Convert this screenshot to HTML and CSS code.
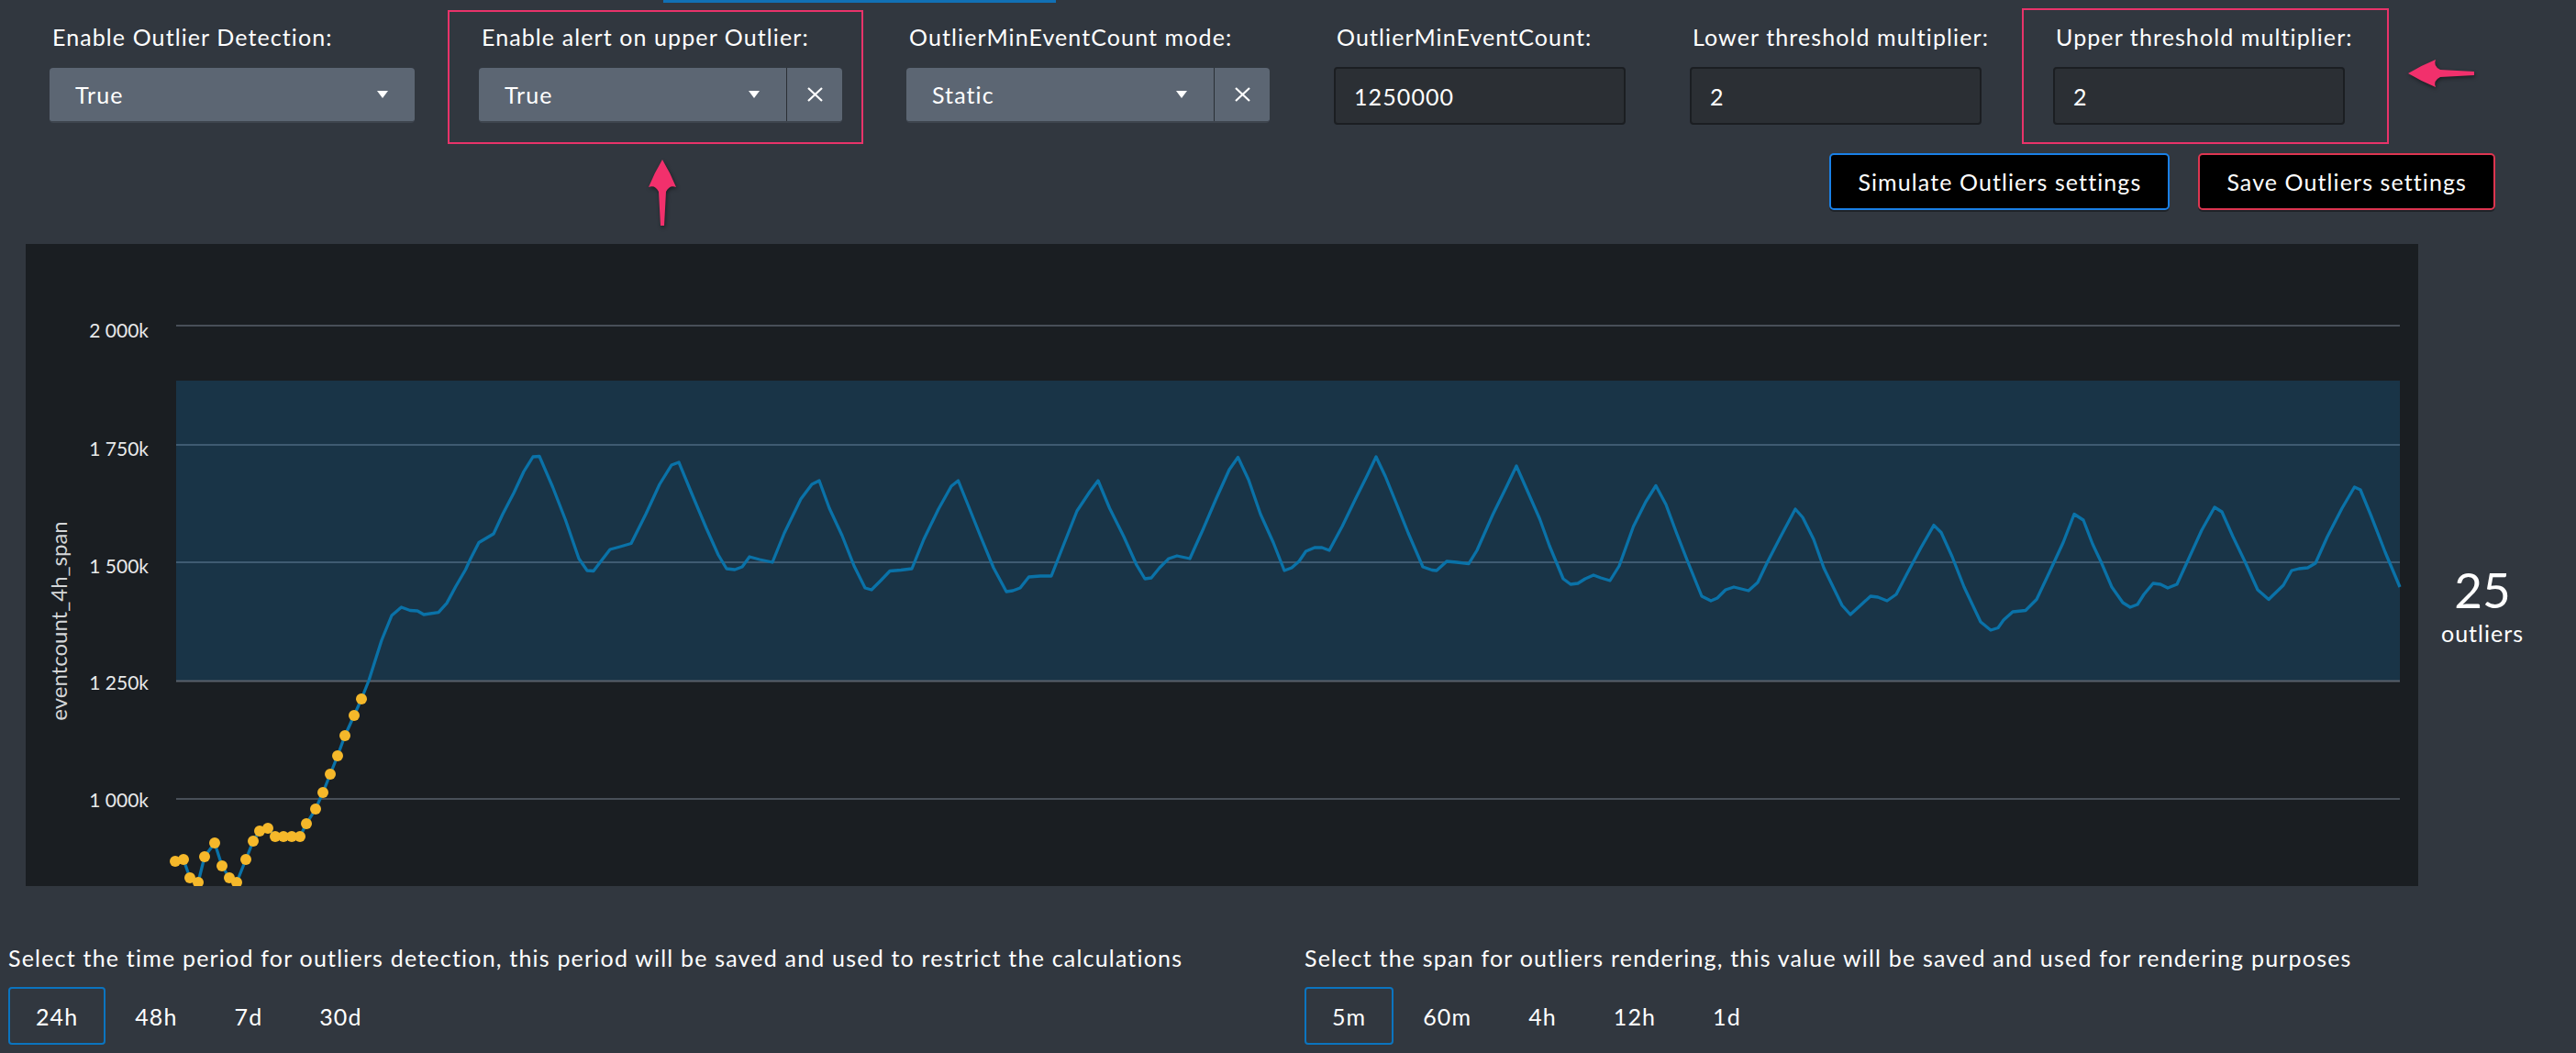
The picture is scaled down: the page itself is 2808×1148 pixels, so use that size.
FILE: index.html
```html
<!DOCTYPE html>
<html>
<head>
<meta charset="utf-8">
<title>Outliers settings</title>
<link rel="stylesheet" href="styles.css">
</head>
<body>
<div class="page">
  <div class="tabline"></div>

  <div class="form-row">
    <div class="field">
      <div class="lbl">Enable Outlier Detection:</div>
      <div class="select sel-first">
        <div class="sel-main"><span>True</span><span class="caret"></span></div>
      </div>
    </div>
    <div class="field">
      <div class="lbl">Enable alert on upper Outlier:</div>
      <div class="select">
        <div class="sel-main"><span>True</span><span class="caret"></span></div>
        <div class="sel-x"><svg width="19" height="16" viewBox="0 0 19 16"><path d="M2 1 L17 15 M17 1 L2 15" stroke="#fff" stroke-width="2.2" fill="none"/></svg></div>
      </div>
    </div>
    <div class="field">
      <div class="lbl">OutlierMinEventCount mode:</div>
      <div class="select">
        <div class="sel-main"><span>Static</span><span class="caret"></span></div>
        <div class="sel-x"><svg width="19" height="16" viewBox="0 0 19 16"><path d="M2 1 L17 15 M17 1 L2 15" stroke="#fff" stroke-width="2.2" fill="none"/></svg></div>
      </div>
    </div>
    <div class="field">
      <div class="lbl">OutlierMinEventCount:</div>
      <div class="txt">1250000</div>
    </div>
    <div class="field">
      <div class="lbl">Lower threshold multiplier:</div>
      <div class="txt">2</div>
    </div>
    <div class="field">
      <div class="lbl">Upper threshold multiplier:</div>
      <div class="txt">2</div>
    </div>
  </div>

  <div class="actions">
    <button class="btn btn-sim">Simulate Outliers settings</button>
    <button class="btn btn-save">Save Outliers settings</button>
  </div>

  <div class="chart-row">
    <div class="chart-panel">
      <svg class="chart" viewBox="28 266 2608 700" width="2608" height="700">
        <rect x="192" y="415" width="2424" height="327" fill="#193447"/>
        <line x1="192" x2="2616" y1="355" y2="355" class="grid"/>
        <line x1="192" x2="2616" y1="485" y2="485" class="grid-band"/>
        <line x1="192" x2="2616" y1="613" y2="613" class="grid-band"/>
        <line x1="192" x2="2616" y1="742.5" y2="742.5" class="grid grid-edge"/>
        <line x1="192" x2="2616" y1="871" y2="871" class="grid"/>
        <text x="162" y="368" class="tick">2 000k</text>
        <text x="162" y="496.5" class="tick">1 750k</text>
        <text x="162" y="625" class="tick">1 500k</text>
        <text x="162" y="752" class="tick">1 250k</text>
        <text x="162" y="880" class="tick">1 000k</text>
        <text class="ytitle" transform="translate(73,677) rotate(-90)">eventcount_4h_span</text>
        <polyline class="series" points="191,939 200,937 207,957 216,962 223,934 234,919 242,944 250,957 258,962 268,937 276,917 283,906 292,903 300,912 309,912 318,912 327,912 334,898 344,882 352,864 360,844 368,824 376,802 386,780 394,762 402,742 416,698 427,671 437.5,662 447,665.5 455,666 462,670 478,667.6 487,657.6 497,639 507.5,621 513,609 522,591.5 538,582 548,560.5 560,537.5 571,514 581,498 588,497.5 602.5,531 616.5,567 631,609 640,622 647,622.5 655,612 665,599 676,596 688,592.5 704,560.5 719,528 732,507 740,504 754,538 770,576 783,605 792,620 801,621 809,618 817,607 828,610 842,613 855,581 873,544 885,528 893,524 904,554 918,584 931,617 943,641 950,643 960,633 970,622.5 982,621.5 994,620 1007,588 1023,555 1037,530 1044.5,524 1055,550 1069,585 1083,619 1097,645 1104,644 1112,641 1121.5,629 1134,628 1146,628 1159,595 1174,557 1188,536 1197,524 1209.5,554 1225,585 1239,616 1248,631 1255,630 1264,619 1274,609 1283,606 1297,609 1311,578 1326,543 1340,512 1349.5,498.5 1361,523 1374,560.5 1388,591.5 1400,622 1408,619 1416,612 1423.5,601 1433,597 1441,597 1449,600 1463,574 1478,543 1490,519 1500,498 1510,519 1522,548.5 1535,581 1551,618 1561,621.5 1566,622 1577,612 1588,613 1601,614.6 1610,600 1627.5,560.5 1642,531 1653,508 1664,533 1678.5,566 1689,595 1704,631 1712,637 1720,636 1728,631 1737,627 1745,630 1755,633 1765,617 1780.5,574 1794,547 1805,529.5 1816,550 1827.5,581 1839,610.5 1855,650 1865,655 1872,652 1881,643 1890,640 1906,644 1916,635 1927,612 1941,585 1957,555 1965,564 1977,588 1988,619 2008,660 2017,670 2028,660 2039,650 2047,651 2057,655 2067,648 2078.5,626 2094,597 2108,572.6 2116,580.5 2128,607 2141,640 2159,678 2170,687 2178,684.5 2184,676 2194,667 2208,665.5 2220,653.5 2233,626 2249,591.5 2261,560.5 2271,567 2281,593 2290,612 2302,640 2314,657 2322,662 2330,659 2337,648 2347,636 2355,637 2363,641 2373,637 2384.5,612 2400,578 2414,553 2422,558 2434,585 2447,612 2461,643 2473,653.5 2489,638 2498,622 2506,620 2515.5,619 2524,614 2537,585 2553,554 2566.5,531 2573,534 2584.5,562 2600,602 2616,640"/>
        <g class="dots">
          <circle cx="191" cy="939" r="6"/><circle cx="200" cy="937" r="6"/>
          <circle cx="207" cy="957" r="6"/><circle cx="216" cy="962" r="6"/>
          <circle cx="223" cy="934" r="6"/><circle cx="234" cy="919" r="6"/>
          <circle cx="242" cy="944" r="6"/><circle cx="250" cy="957" r="6"/>
          <circle cx="258" cy="962" r="6"/><circle cx="268" cy="937" r="6"/>
          <circle cx="276" cy="917" r="6"/><circle cx="283" cy="906" r="6"/>
          <circle cx="292" cy="903" r="6"/><circle cx="300" cy="912" r="6"/>
          <circle cx="309" cy="912" r="6"/><circle cx="318" cy="912" r="6"/>
          <circle cx="327" cy="912" r="6"/><circle cx="334" cy="898" r="6"/>
          <circle cx="344" cy="882" r="6"/><circle cx="352" cy="864" r="6"/>
          <circle cx="360" cy="844" r="6"/><circle cx="368" cy="824" r="6"/>
          <circle cx="376" cy="802" r="6"/><circle cx="386" cy="780" r="6"/>
          <circle cx="394" cy="762" r="6"/>
        </g>
      </svg>
    </div>
    <div class="stat">
      <div class="stat-num">25</div>
      <div class="stat-lbl">outliers</div>
    </div>
  </div>

  <div class="bottom">
    <div class="col">
      <p class="hint">Select the time period for outliers detection, this period will be saved and used to restrict the calculations</p>
      <div class="seg">
        <button class="seg-btn active">24h</button>
        <button class="seg-btn">48h</button>
        <button class="seg-btn">7d</button>
        <button class="seg-btn">30d</button>
      </div>
    </div>
    <div class="col">
      <p class="hint">Select the span for outliers rendering, this value will be saved and used for rendering purposes</p>
      <div class="seg">
        <button class="seg-btn active">5m</button>
        <button class="seg-btn">60m</button>
        <button class="seg-btn">4h</button>
        <button class="seg-btn">12h</button>
        <button class="seg-btn">1d</button>
      </div>
    </div>
  </div>

  <div class="annot annot-1"></div>
  <div class="annot annot-2"></div>
  <svg class="arrow arrow-left" width="74" height="32" viewBox="0 0 74 32"><path d="M1,16 Q16,7 31,1 Q28,8 36,12 L73,14 L73,18 L36,20 Q28,24 31,31 Q16,25 1,16 Z"/></svg>
  <svg class="arrow arrow-up" width="32" height="74" viewBox="0 0 32 74"><path d="M16,1 Q7,16 1,31 Q8,28 12,36 L14,73 L18,73 L20,36 Q24,28 31,31 Q25,16 16,1 Z"/></svg>
</div>
</body>
</html>
```

FILE: styles.css
```css
* { box-sizing: border-box; }

html, body {
  margin: 0;
  padding: 0;
  background: #31373f;
}

body {
  font-family: Lato, "Open Sans", sans-serif;
  color: #ffffff;
}

.page {
  position: relative;
  width: 2808px;
  height: 1148px;
  overflow: hidden;
  background: #31373f;
}

.tabline {
  margin-left: 723px;
  width: 428px;
  height: 3px;
  background: #1170b5;
}

/* ---------- form row ---------- */
.form-row {
  display: flex;
  gap: 70px;
  padding: 22px 0 0 54px;
}

.field {
  display: flex;
  flex-direction: column;
}

.lbl {
  font-size: 25px;
  letter-spacing: 1.1px;
  line-height: 30px;
  margin: 0 0 18px 3px;
  white-space: nowrap;
}

.select {
  display: flex;
  width: 396px;
  height: 60px;
  margin-top: 1px;
  background: #5c6673;
  border-bottom: 2px solid #3e454e;
  border-radius: 4px;
  font-size: 25px;
  letter-spacing: 1.1px;
}

.sel-first { width: 398px; }

.sel-main {
  flex: 1;
  display: flex;
  align-items: center;
  justify-content: space-between;
  padding: 0 29px 0 28px;
}

.caret {
  width: 0;
  height: 0;
  border-left: 6.5px solid transparent;
  border-right: 6.5px solid transparent;
  border-top: 8px solid #ffffff;
}

.sel-x {
  width: 61px;
  display: flex;
  align-items: center;
  justify-content: center;
  border-left: 1px solid #2a2f35;
}

.txt {
  width: 318px;
  height: 63px;
  display: flex;
  align-items: center;
  padding-left: 20px;
  background: #2b2f34;
  border: 2px solid #1b1e22;
  border-radius: 4px;
  font-size: 25px;
  letter-spacing: 1.1px;
}

/* ---------- action buttons ---------- */
.actions {
  display: flex;
  justify-content: flex-end;
  gap: 31px;
  margin-top: 31px;
  padding-right: 88px;
}

.btn {
  height: 62px;
  padding: 0 29px;
  background: #000000;
  color: #ffffff;
  border: 2px solid;
  border-radius: 5px;
  font-family: Lato, "Open Sans", sans-serif;
  font-size: 25px;
  letter-spacing: 1.1px;
  box-shadow: 0 2px 0 rgba(0, 0, 0, 0.35);
}

.btn-sim { border-color: #1a80e6; }
.btn-save { border-color: #dd3550; }

/* ---------- chart ---------- */
.chart-row {
  display: flex;
  margin-top: 37px;
  padding-left: 28px;
}

.chart-panel {
  width: 2608px;
  height: 700px;
  background: #1a1e22;
}

.chart { display: block; }

.grid { stroke: #59616b; stroke-width: 1.5; }
.grid-edge { stroke-width: 2; }
.grid-band { stroke: #4c6881; stroke-width: 1.5; }

.tick {
  font-family: Lato, sans-serif;
  font-size: 21px;
  fill: #e8e9ea;
  text-anchor: end;
}

.ytitle {
  font-family: Lato, sans-serif;
  font-size: 24px;
  fill: #d4d6d8;
  text-anchor: middle;
}

.series {
  fill: none;
  stroke: #0a72a8;
  stroke-width: 3.3;
  stroke-linejoin: round;
}

.dots circle { fill: #f5b82a; }

.stat {
  width: 140px;
  padding-top: 350px;
  text-align: center;
}

.stat-num {
  font-size: 53px;
  line-height: 53px;
}

.stat-lbl {
  margin-top: 6px;
  font-size: 25px;
  letter-spacing: 1px;
  line-height: 30px;
}

/* ---------- bottom ---------- */
.bottom {
  display: grid;
  grid-template-columns: 1413px auto;
  margin-top: 63px;
  padding-left: 9px;
}

.hint {
  margin: 0;
  font-size: 25px;
  letter-spacing: 1.2px;
  line-height: 30px;
  white-space: nowrap;
}

.seg {
  display: flex;
  gap: 2px;
  margin-top: 17px;
}

.seg-btn {
  height: 63px;
  padding: 0 28px;
  background: transparent;
  color: #ffffff;
  border: 2px solid transparent;
  border-radius: 4px;
  font-family: Lato, "Open Sans", sans-serif;
  font-size: 25px;
  letter-spacing: 1.1px;
}

.seg-btn.active { border-color: #0b74bf; }

/* ---------- annotations ---------- */
.annot {
  position: absolute;
  border: 2px solid #e8336a;
  pointer-events: none;
}

.annot-1 { left: 488px; top: 11px; width: 453px; height: 146px; }
.annot-2 { left: 2204px; top: 9px; width: 400px; height: 148px; }

.arrow {
  position: absolute;
  fill: #f2306c;
  filter: drop-shadow(1px 2px 2px rgba(0, 0, 0, 0.45));
}

.arrow-left { left: 2624px; top: 64px; }
.arrow-up { left: 706px; top: 173px; }
```
